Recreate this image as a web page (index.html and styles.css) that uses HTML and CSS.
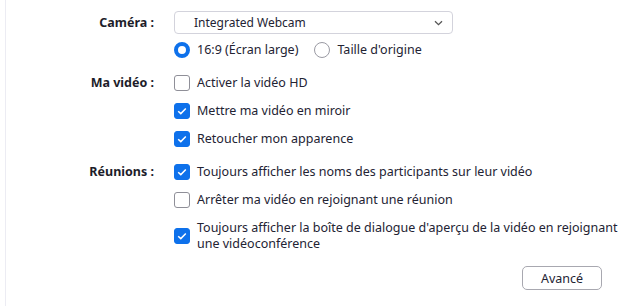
FILE: index.html
```html
<!DOCTYPE html>
<html lang="fr">
<head>
    <meta charset="UTF-8">
    <title>Paramètres vidéo</title>
    <link rel="stylesheet" href="styles.css">
</head>
<body>
    <div class="panel">
        <div class="settings">
            <!-- Caméra -->
            <div class="label label-camera">Caméra :</div>
            <div class="section">
                <div class="select">
                    <span>Integrated Webcam</span>
                    <svg class="chevron" width="9" height="6" viewBox="0 0 9 6"><path d="M1 1.2 L4.5 4.6 L8 1.2" fill="none" stroke="#555" stroke-width="1.3"/></svg>
                </div>
                <div class="radios">
                    <label class="option"><span class="radio checked"></span>16:9 (Écran large)</label>
                    <label class="option"><span class="radio"></span>Taille d'origine</label>
                </div>
            </div>

            <!-- Ma vidéo -->
            <div class="label">Ma vidéo :</div>
            <div class="section options">
                <label class="option"><span class="box"></span>Activer la vidéo HD</label>
                <label class="option"><span class="box checked"><svg width="10" height="8" viewBox="0 0 10 8"><path d="M1.2 4.2 L3.8 6.6 L8.8 1.4" fill="none" stroke="#fff" stroke-width="1.5"/></svg></span>Mettre ma vidéo en miroir</label>
                <label class="option"><span class="box checked"><svg width="10" height="8" viewBox="0 0 10 8"><path d="M1.2 4.2 L3.8 6.6 L8.8 1.4" fill="none" stroke="#fff" stroke-width="1.5"/></svg></span>Retoucher mon apparence</label>
            </div>

            <!-- Réunions -->
            <div class="label">Réunions :</div>
            <div class="section options">
                <label class="option"><span class="box checked"><svg width="10" height="8" viewBox="0 0 10 8"><path d="M1.2 4.2 L3.8 6.6 L8.8 1.4" fill="none" stroke="#fff" stroke-width="1.5"/></svg></span>Toujours afficher les noms des participants sur leur vidéo</label>
                <label class="option"><span class="box"></span>Arrêter ma vidéo en rejoignant une réunion</label>
                <label class="option"><span class="box checked"><svg width="10" height="8" viewBox="0 0 10 8"><path d="M1.2 4.2 L3.8 6.6 L8.8 1.4" fill="none" stroke="#fff" stroke-width="1.5"/></svg></span><span class="wrap">Toujours afficher la boîte de dialogue d'aperçu de la vidéo en rejoignant une vidéoconférence</span></label>
            </div>
        </div>
        <div class="footer">
            <button class="button">Avancé</button>
        </div>
    </div>
</body>
</html>
```

FILE: styles.css
```css
body {
    margin: 0;
    background-color: #fff;
    font-family: 'Noto Sans', 'Open Sans', sans-serif;
    font-size: 12.5px;
    color: #232333;
}
.panel {
    margin-left: 5px;
    border-left: 1px solid #ececf3;
    height: 306px;
    box-sizing: border-box;
    padding-top: 11px;
}
.settings {
    display: grid;
    grid-template-columns: 148px 1fr;
    column-gap: 20px;
    row-gap: 17px;
}
.label {
    text-align: right;
    font-weight: bold;
    line-height: 16px;
    color: #1d1d2a;
}
.label-camera {
    line-height: 23px;
}
.section {
    display: flex;
    flex-direction: column;
}
.options {
    gap: 12px;
}
.select {
    width: 279px;
    height: 23px;
    box-sizing: border-box;
    border: 1px solid #d3d3dc;
    border-radius: 4px;
    display: flex;
    align-items: center;
    justify-content: space-between;
    padding: 0 9px 0 19px;
    font-size: 12px;
}
.radios {
    display: flex;
    gap: 16px;
    margin-top: 8px;
}
.option {
    display: flex;
    align-items: center;
    gap: 7px;
    line-height: 16px;
}
.wrap {
    width: 440px;
}
.radio {
    width: 16px;
    height: 16px;
    box-sizing: border-box;
    border-radius: 50%;
    border: 1px solid #9a9aa3;
    flex-shrink: 0;
}
.radio.checked {
    border: 4px solid #0e71eb;
}
.box {
    width: 16px;
    height: 16px;
    box-sizing: border-box;
    border-radius: 3px;
    border: 1px solid #8f8f98;
    flex-shrink: 0;
    display: flex;
    align-items: center;
    justify-content: center;
}
.box.checked {
    background-color: #0e71eb;
    border-color: #0e71eb;
}
.footer {
    display: flex;
    justify-content: flex-end;
    padding-right: 29px;
    margin-top: 14px;
}
.button {
    width: 80px;
    height: 24px;
    border: 1px solid #a8a8b0;
    border-radius: 5px;
    background-color: #fff;
    font-family: inherit;
    font-size: 12.5px;
    color: #232333;
    padding: 0;
}
```
